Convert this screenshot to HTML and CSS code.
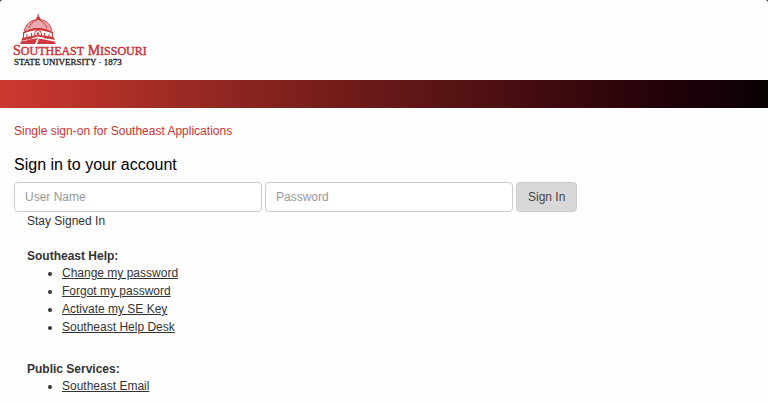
FILE: index.html
```html
<!DOCTYPE html>
<html lang="en">
<head>
<meta charset="utf-8">
<meta name="viewport" content="width=device-width, initial-scale=1">
<title>Southeast Missouri State University - Sign In</title>
<link rel="stylesheet" href="styles.css">
</head>
<body>
<div class="page">
  <header class="header">
    <svg class="logo" viewBox="0 0 136 56" role="img" aria-label="Southeast Missouri State University 1873">
      <g class="dome">
        <path d="M23.500 0h1l.5 3h1l.5 3h-4.500l.5-3h1z"/>
        <path class="tint" d="M10 17C12 9.500 17 6 24 5.500S36 9.500 38 17Q24 10 10 17z"/>
        <path class="line" d="M10.500 17C12 9.500 17 6 24 5.500S36 9.500 38 17M15 14C16 10.500 19 7.500 22.500 6M33 14C32 10.500 29 7.500 25.500 6"/>
        <path d="M9 18Q24 9.500 39 18v2Q24 12.500 9 20z"/>
        <path class="line" d="M9.500 18v8M38.500 18v7M13 20v5h4.500v-6M35 20v4h-4.500v-5M20.500 21v-1a3.500 3.500 0 0 1 7 0v1"/>
        <circle cx="24" cy="19.500" r="1.200"/>
        <path d="M8 24L24 20.500l15.500 2.500 1.500 3L24 22.500 7.500 27z"/>
        <path d="M6 30l1-2.500L24 24l-1.500 2.500L21 30zM23 30l2-5.500 15.500 3L42 30z"/>
      </g>
      <text class="logo-name" x="-1" y="41">S<tspan class="small">OUTHEAST</tspan> M<tspan class="small">ISSOURI</tspan></text>
      <text class="logo-sub" x="0" y="51">STATE UNIVERSITY · 1873</text>
    </svg>
  </header>
  <div class="band"></div>
  <main class="main">
    <p class="tagline">Single sign-on for Southeast Applications</p>
    <h1 class="title">Sign in to your account</h1>
    <form class="form">
      <input class="field" type="text" placeholder="User Name" aria-label="User Name">
      <input class="field" type="password" placeholder="Password" aria-label="Password">
      <button class="button" type="submit">Sign In</button>
    </form>
    <div class="details">
      <p class="stay">Stay Signed In</p>
      <section class="group">
        <h2>Southeast Help:</h2>
        <ul>
          <li><a href="#">Change my password</a></li>
          <li><a href="#">Forgot my password</a></li>
          <li><a href="#">Activate my SE Key</a></li>
          <li><a href="#">Southeast Help Desk</a></li>
        </ul>
      </section>
      <section class="group">
        <h2>Public Services:</h2>
        <ul>
          <li><a href="#">Southeast Email</a></li>
        </ul>
      </section>
    </div>
  </main>
</div>
</body>
</html>
```
FILE: styles.css
```css
* {
  box-sizing: border-box;
}

html {
  background: #333;
}

body {
  margin: 0;
  font-family: "Liberation Sans", Arial, sans-serif;
  font-size: 12px;
  line-height: 18px;
  color: #333;
}

.page {
  min-height: 100vh;
  background: #fefefe;
  border-radius: 3px 3px 0 0;
}

.header {
  padding: 14px 14px 10px;
}

.logo {
  display: block;
  width: 136px;
  height: 56px;
  overflow: visible;
  font-family: "Liberation Serif", "Times New Roman", serif;
}

.dome {
  fill: #cf3a40;
}

.tint {
  fill: #eba9ab;
}

.line {
  fill: none;
  stroke: #cf3a40;
  stroke-width: 1;
}

.logo-name {
  font-size: 14px;
  fill: #cb2f38;
  stroke: #cb2f38;
  stroke-width: 0.4;
}

.logo-name .small {
  font-size: 12px;
}

.logo-sub {
  font-size: 9px;
  fill: #222;
  stroke: #222;
  stroke-width: 0.3;
}

.band {
  height: 28px;
  background: linear-gradient(to right, #cc392f 0%, #7a1f1c 40%, #27030a 84%, #080003 100%);
}

.main {
  padding: 14px 14px 0;
}

p,
h1,
h2,
ul {
  margin: 0;
}

.tagline {
  color: #cc3333;
}

.title {
  margin: 15px 0 7px;
  font-size: 16px;
  font-weight: normal;
  line-height: 20px;
  color: #000;
}

.form {
  display: flex;
  gap: 3px;
}

.field {
  flex: 0 1 248px;
  min-width: 0;
  height: 30px;
  padding: 0 10px;
  border: 1px solid #ccc;
  border-radius: 4px;
  background: #fff;
  font: inherit;
  color: #333;
}

.field::placeholder {
  color: #999;
}

.button {
  height: 30px;
  padding: 0 11px;
  border: 1px solid #ccc;
  border-radius: 4px;
  background: #d8d8d8;
  font: inherit;
  color: #444;
}

.details {
  padding-left: 13px;
}

.group {
  margin-top: 18px;
}

.group + .group {
  margin-top: 25px;
}

.group h2 {
  font-size: 12px;
  line-height: 16px;
}

.group ul {
  padding-left: 35px;
}

.group a {
  color: #333;
}
```
